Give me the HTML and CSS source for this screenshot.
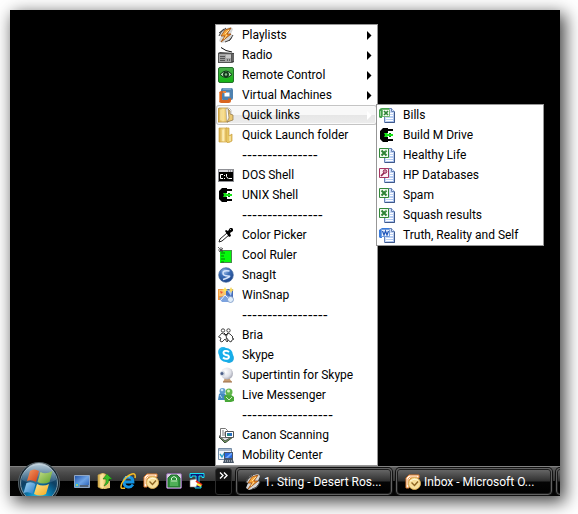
FILE: index.html
```html
<!DOCTYPE html>
<html lang="en">
<head>
<meta charset="utf-8">
<title>Desktop</title>
<link rel="stylesheet" href="styles.css">
</head>
<body>
<svg class="defs" aria-hidden="true">
  <defs>
    <linearGradient id="gFolder" x1="0" x2="1"><stop offset="0" stop-color="#d3a945"/><stop offset=".5" stop-color="#fbe397"/><stop offset="1" stop-color="#dfb350"/></linearGradient>
    <linearGradient id="gGreen" x1="0" y1="0" x2="0" y2="1"><stop offset="0" stop-color="#4cae4c"/><stop offset="1" stop-color="#12b512"/></linearGradient>
    <linearGradient id="gPage" x1="0" y1="0" x2="1" y2="1"><stop offset="0" stop-color="#eef4ff"/><stop offset="1" stop-color="#9ab7ea"/></linearGradient>
    <radialGradient id="gSnag" cx=".4" cy=".25" r=".8"><stop offset="0" stop-color="#9fbde8"/><stop offset=".4" stop-color="#3f70b8"/><stop offset="1" stop-color="#173f86"/></radialGradient>
    <linearGradient id="gBolt" x1="0" y1="0" x2="1" y2="1"><stop offset="0" stop-color="#ffc558"/><stop offset="1" stop-color="#e8700c"/></linearGradient>
    <radialGradient id="gBall" cx=".35" cy=".35" r=".75"><stop offset="0" stop-color="#fff"/><stop offset=".6" stop-color="#dfe1e8"/><stop offset="1" stop-color="#9a9caa"/></radialGradient>
    <radialGradient id="gOrb" cx=".5" cy=".95" r=".85"><stop offset="0" stop-color="#35d5f5"/><stop offset=".35" stop-color="#0b83b8"/><stop offset=".7" stop-color="#0d3f63"/><stop offset="1" stop-color="#2f5a78"/></radialGradient>
    <linearGradient id="gGloss" x1="0" y1="0" x2="0" y2="1"><stop offset="0" stop-color="#e4f0f8" stop-opacity=".8"/><stop offset="1" stop-color="#7fa6c2" stop-opacity=".2"/></linearGradient>
    <linearGradient id="gRed" x1="0" y1="0" x2="1" y2="1"><stop offset="0" stop-color="#f59a62"/><stop offset="1" stop-color="#cf3c14"/></linearGradient>
    <linearGradient id="gLeaf" x1="0" y1="0" x2="1" y2="1"><stop offset="0" stop-color="#c8e08a"/><stop offset="1" stop-color="#5ca02c"/></linearGradient>
    <linearGradient id="gSky" x1="0" y1="0" x2="1" y2="1"><stop offset="0" stop-color="#a5daf7"/><stop offset="1" stop-color="#2878c4"/></linearGradient>
    <linearGradient id="gSun" x1="0" y1="0" x2="1" y2="1"><stop offset="0" stop-color="#ffe38a"/><stop offset="1" stop-color="#f5a91d"/></linearGradient>
    <linearGradient id="gScreen" x1="0" y1="0" x2="1" y2="1"><stop offset="0" stop-color="#1c4fa8"/><stop offset=".5" stop-color="#6ea3e4"/><stop offset="1" stop-color="#1e55b0"/></linearGradient>

    <symbol id="winamp" viewBox="0 0 16 16">
      <path d="M5 2 13 0l2 2-2 5 2 1-4 6-7 2-3-2 2-5-2-1z" fill="#d5d5d5"/>
      <path d="M8 1 3 5 1 9M6 2 1 6M15 8l-3 5-5 2M14 10l-3 4" fill="none" stroke="#444"/>
      <path d="M13 1 7 3 3 9h4l-4 6 10-8H9z" fill="url(#gBolt)" stroke="#9c4a08" stroke-width=".8"/>
      <path d="m11 3-4 4M9 8l-3 4" stroke="#ffe29a"/>
    </symbol>
    <symbol id="radio" viewBox="0 0 16 16">
      <path d="m3 .5 5 3 6 1.500" fill="none" stroke="#111"/>
      <path d="m0 6 2-1 14 1v9l-2 1H0z" fill="#444"/>
      <path d="M.5 6.500h13v9H.5z" fill="#a5a5a5" stroke="#555"/>
      <path d="M2 9h5v5H2z" fill="#555"/><path d="M2 10.500h5M2 12.500h5" stroke="#ccc" stroke-width=".6"/>
      <path d="M8 8h5v3H8z" fill="#c9c9c9"/><path d="M9 13h1m1 0h1" stroke="#222"/>
      <path d="M15 7v7" stroke="#888"/>
    </symbol>
    <symbol id="eye" viewBox="0 0 16 16">
      <rect x=".5" y=".5" width="15" height="15" rx="1.500" fill="url(#gGreen)" stroke="#23702a"/>
      <path d="M2 7.500q6-7 12 0-6 6-12 0z" fill="#b3dfb3" stroke="#10351a"/>
      <circle cx="8" cy="7.500" r="3" fill="#143a1b"/><circle cx="8" cy="7.500" r="1.200" fill="#86bd89"/>
    </symbol>
    <symbol id="vm" viewBox="0 0 16 16">
      <rect x="3" y="1" width="12" height="12" rx="2" fill="#4f82b0"/><path d="M5 2h8" stroke="#9cc0de"/>
      <rect x="2.500" y="5.500" width="9" height="9" rx="1" fill="none" stroke="#d9641f" stroke-width="3"/>
      <rect x="5.500" y="4.500" width="7" height="6" rx="1" fill="#fff" stroke="#4f82b0" stroke-width="2"/>
      <path d="M5 5h3" stroke="#e9853e" stroke-width="2"/><path d="M1.500 6v8" stroke="#f09a60"/>
    </symbol>
    <symbol id="folder-open" viewBox="0 0 16 16">
      <path d="M1 1h9v14H0V2z" fill="url(#gFolder)" stroke="#b68b34" stroke-width=".7"/>
      <path d="m8 2 3-1 2 2v10l-4 2z" fill="#fff" stroke="#9a9a9a" stroke-width=".6"/>
      <path d="m10 2 2 2v3l3 1v5l-6 2 2-4z" fill="#ebc872" stroke="#8f7443" stroke-width=".7"/>
      <path d="M3 3v10" stroke="#f9e8ab"/>
    </symbol>
    <symbol id="folder" viewBox="0 0 16 16">
      <path d="M1 1h8l1 14H1z" fill="url(#gFolder)" stroke="#cba243" stroke-width=".7"/>
      <path d="M8 1h3v8l3-2v7l-4 2-2-2z" fill="#e8c763" stroke="#c99f3f" stroke-width=".7"/>
      <path d="M5 3v11M12 9v5" stroke="#fff5cb"/>
    </symbol>
    <symbol id="dos" viewBox="0 0 16 16">
      <path d="M0 2h16v13H0z" fill="#8f9095"/><path d="M1 3h14v2H1z" fill="#d5d5dc"/><path d="M10 4h1m1 0h1m1 0h1" stroke="#555"/>
      <path d="M1 5h14v9H1z" fill="#000"/>
      <path d="M5 7.500H2.500v4H5M6.500 8v1m0 2v1M8.500 7v2.500l2 2.500M11 11.500h3" stroke="#fff" fill="none"/>
    </symbol>
    <symbol id="plug" viewBox="0 0 16 16">
      <path d="M4 1h5v1h5v2H9v2H8v4h1v2h5v2H9v1H4l-3-3V4z" fill="#000"/>
      <path d="M5 6h3l1 1h5v2H9l-1 1H5l1-2z" fill="#16e516"/><path d="M10 6h2v1h-2zM10 9h2v1h-2z" fill="#087708"/>
    </symbol>
    <symbol id="picker" viewBox="0 0 16 16">
      <path d="M9 6 2 12l-1 3 3-1 7-6" fill="#fff" stroke="#222"/>
      <path d="m7 4 1-1 2 1 2-3h2l1 1v2l-3 2 1 3-2 1z" fill="#000"/><path d="m12 3 1-1" stroke="#aaa"/>
    </symbol>
    <symbol id="ruler" viewBox="0 0 16 16">
      <path d="M2 3h12v13H2z" fill="#05fa0b"/><path d="M2 3.500h11.500v12H3" fill="none" stroke="#4c8250"/>
      <path d="M3 6h4M3 9h3M3 12h4M3 15h3" stroke="#09790c"/>
      <path d="m0 0 5 5M3 0v5M0 3h5M1 5l4-4" stroke="#444" stroke-width=".8"/>
    </symbol>
    <symbol id="snagit" viewBox="0 0 16 16">
      <circle cx="8" cy="8" r="7.300" fill="url(#gSnag)" stroke="#476b9f" stroke-width=".7"/>
      <path d="M11.500 4Q5 3 5 6t5 3-5 3.500" fill="none" stroke="#d5e3fa" stroke-width="1.500"/>
    </symbol>
    <symbol id="winsnap" viewBox="0 0 16 16">
      <path d="M0 2h9v11H0z" fill="#f09a42"/><path d="M1 3h7v6H1z" fill="#f9c36d"/>
      <path d="M8 2h7v11H8z" fill="#476dba"/><path d="m9 3 5 1-1 5z" fill="#aacbf4"/>
      <path d="m1 11 7-3 5 2v5H4z" fill="#7ca3df"/><path d="m3 13 4-5 3 3" fill="none" stroke="#e6edff"/>
      <path d="m7 0 1 2 2 1-2 1-1 2-1-2-2-1 2-1z" fill="#ffe357"/><path d="m13 0 1 2 2 1-2 1-1 2-1-2-1-1 1-1z" fill="#f8d85e"/>
      <circle cx="12.500" cy="12.500" r="3" fill="#e0eefb" stroke="#7696c3" stroke-width=".8"/>
      <path d="m2 4 3 1-2 2z" fill="#ee5430"/>
    </symbol>
    <symbol id="bria" viewBox="0 0 16 16">
      <g fill="#fff" stroke="#444"><circle cx="5" cy="3.500" r="1.700"/><circle cx="10.500" cy="3.500" r="1.700"/>
      <path d="m4 6-3.500 4 2.500 1-1 3 2 1 3-3 2 3 1-1-2-3 2-1z"/><path d="m10 6-2 4 3 4 2 1 1-2 2-1-2-1 1-1-3-3z"/></g>
      <path d="m6 6 2 2 2-2" stroke="#222" fill="none"/>
    </symbol>
    <symbol id="skype" viewBox="0 0 16 16">
      <circle cx="5" cy="5" r="4.900" fill="#25b5ed"/><circle cx="11" cy="11" r="4.900" fill="#1ca9e2"/><circle cx="8" cy="8" r="6.900" fill="#16aeea"/>
      <path d="M11 5Q9 3.500 7 4 4.500 5 6 7q1 1 4 1.500 2 1.500 0 3-3 1-5-1" fill="none" stroke="#fff" stroke-width="1.900"/>
    </symbol>
    <symbol id="webcam" viewBox="0 0 16 16">
      <path d="M7 11h4l3 4H5z" fill="#c79c70"/><path d="M5 15h9" stroke="#9a6d46"/>
      <circle cx="9" cy="6.500" r="6" fill="url(#gBall)"/>
      <circle cx="4.500" cy="6.500" r="2.600" fill="#d2d8e0"/><circle cx="4" cy="6.500" r="1.500" fill="#4c5f88"/>
    </symbol>
    <symbol id="messenger" viewBox="0 0 16 16">
      <path d="M1 7q4-3 7 1v5H0z" fill="#4389c0"/><circle cx="4.500" cy="4" r="3" fill="#5d9dce"/><circle cx="4" cy="3" r="1.300" fill="#c3e2f6"/>
      <path d="M6 9q5-4 10 1v4l-3 1H7z" fill="#48a838"/><circle cx="11" cy="5" r="3.500" fill="#60b64b"/><circle cx="10.500" cy="4" r="1.500" fill="#d3f2b5"/>
      <path d="m8 10 3 3 3-3" fill="none" stroke="#cbeeb8"/><path d="m2 8 2 3" stroke="#b6dcf5"/>
    </symbol>
    <symbol id="scan" viewBox="0 0 16 16">
      <path d="m1 10 6-3 8 3-8 6z" fill="#71a55b" stroke="#3d4a3b"/><path d="M1 9h14l-8 5z" fill="#ddd" stroke="#555"/>
      <path d="M2.500 1.500h5l2 2v7h-7z" fill="#fff" stroke="#777"/><path d="M4 4h2M4 6h3M4 8h3" stroke="#777"/>
      <path d="M7.500 4.500h8v6h-8z" fill="#fff" stroke="#555"/><path d="M9 6h5v3H9z" fill="#286fc0"/><path d="M9 8h3" stroke="#22a343"/>
    </symbol>
    <symbol id="mobility" viewBox="0 0 16 16">
      <path d="M.5 1.500h13v11H.5z" fill="#f1f5fa" stroke="#738ba5"/><path d="M1 2h12v2H1z" fill="#a8bacc"/>
      <path d="m2 7 2 3 3-5" fill="none" stroke="#27a0c7" stroke-width="1.400"/>
      <path d="M6 5h9v8H6z" fill="#46566c"/><path d="M7 6h7v5H7z" fill="#286be0"/><path d="m7 11 6-5h1v1l-4 4z" fill="#70aaff"/>
      <path d="m6 13-1 3h11l-1-3z" fill="#485667"/><path d="M7 14h7" stroke="#d9dee5" stroke-dasharray="1 1"/>
    </symbol>
    <symbol id="page" viewBox="0 0 16 16">
      <path d="M5.500 1.500h7l3 3v11h-10z" fill="url(#gPage)" stroke="#6682b6"/><path d="M12.500 1.500v3h3" fill="#d8e4fa" stroke="#6682b6"/>
      <path d="M11 6.500h3M11 8.500h3M7 11.500h7M7 13.500h7" stroke="#fff"/><path d="M15.500 5v10.500H6" fill="none" stroke="#3f5889"/>
    </symbol>
    <symbol id="excel" viewBox="0 0 16 16">
      <use href="#page"/><path d="M.5 1.500h9v9h-9z" fill="#f4fbf2" stroke="#33883a"/>
      <path d="m2.500 3.500 5 5m0-5-5 5" stroke="#2d8335" stroke-width="2"/><path d="m6 4 2-1" stroke="#94c790"/>
    </symbol>
    <symbol id="excel-sheet" viewBox="0 0 16 16">
      <use href="#page"/><path d="M0 3q1-2 3-2h7v9H3v1H1l-1-1z" fill="#43a04b"/><path d="M3.500 2.500h7v7h-7z" fill="#f4fbf2" stroke="#72b773"/>
      <path d="m5 4 4 4m0-4L5 8" stroke="#2d8335" stroke-width="1.700"/><path d="M1.500 4v5" stroke="#9bd298"/>
    </symbol>
    <symbol id="access" viewBox="0 0 16 16">
      <use href="#page"/><path d="M.5 1.500h9v9h-9z" fill="#fdf0f5" stroke="#a53662"/>
      <path d="M2 9 6 5" stroke="#8f214e" stroke-width="1.700"/><circle cx="6" cy="4.500" r="1.800" fill="#cc8ca7" stroke="#9a2f5b"/>
    </symbol>
    <symbol id="word" viewBox="0 0 16 16">
      <use href="#page"/><path d="m0 3 3-2h7v9H3v1H1l-1-1z" fill="#397bdc"/><path d="M2.500 2.500h8v7h-8z" fill="#edf4ff" stroke="#759fde"/>
      <path d="m3.500 4 1.500 4 1.500-4L8 8l1.500-4" fill="none" stroke="#2358ba" stroke-width="1.300"/>
    </symbol>
    <symbol id="desktop" viewBox="0 0 16 16">
      <path d="M.5 2.500h15v12H.5z" fill="url(#gScreen)" stroke="#8fa6c4"/><path d="M1 12h14v2H1z" fill="#7c92aa"/>
      <path d="M6 13h8" stroke="#26354b"/><circle cx="3" cy="12" r="2" fill="#2bb0e6"/><path d="M3 11v2M2 12h2" stroke="#ffcf39" stroke-width=".7"/>
    </symbol>
    <symbol id="folder-up" viewBox="0 0 16 16">
      <path d="M1 2 6 0l4 2v13l-5 1-4-2z" fill="url(#gFolder)" stroke="#cba64c" stroke-width=".6"/><path d="M7 8h6v7l-6 1z" fill="#e8ca78"/>
      <path d="m10 1 5 5h-3q0 5-5 7 3-4 2-7H6z" fill="#38bd27" stroke="#187b13" stroke-width=".6"/><path d="M4 2v12" stroke="#fff1b8"/>
    </symbol>
    <symbol id="ie" viewBox="0 0 16 16">
      <path d="M13 11.500q-2 3-5 2.500-4-.5-4-5t4-5q5 0 5 5H5" fill="none" stroke="#1594e2" stroke-width="2.800"/>
      <path d="M5 4q2-1 5 0" stroke="#7bd8ff" fill="none"/>
      <path d="M15 5q1-5-3-4Q6 3 2 10q-3 7 3 5" fill="none" stroke="#f3bb27" stroke-width="1.500"/>
    </symbol>
    <symbol id="outlook" viewBox="0 0 16 16">
      <path d="M1 13V4l3-3h10v3H6L4 6v8H1z" fill="#fff4e6" stroke="#df7a2b"/><path d="M3 11V5l2-2h7" fill="none" stroke="#f3a55f"/>
      <circle cx="9.500" cy="9.500" r="6" fill="#f7df9b" stroke="#d9ac55"/>
      <path d="M5 7q4-3 8-1" stroke="#fff8d7" fill="none"/><path d="m6.500 8.500 3 3 3.500-4" fill="none" stroke="#8c6422" stroke-width="1.400"/>
    </symbol>
    <symbol id="bag" viewBox="0 0 16 16">
      <rect x=".5" y=".5" width="15" height="15" rx="1.500" fill="#d8cce0" stroke="#8b67a5"/>
      <path d="m2 5 3-3h6l3 3v9H2z" fill="#2c8f3a" stroke="#256c31"/><path d="M5.500 7V5q2.500-3 5 0v2" fill="none" stroke="#d7f3d8"/>
      <path d="M4 7h8v6H4z" fill="#4fae57"/><path d="M5 8h6" stroke="#bfe6bd"/>
    </symbol>
    <symbol id="textpad" viewBox="0 0 16 16">
      <path d="M1 .5h14v4h-2V3h-3v9h2v3H6v-2h1V3H3v1.500H1z" fill="#0b1b7c" stroke="#19dff2"/>
      <path d="m1 7 6-1 2 4-2 4H1z" fill="#fff" stroke="#777" stroke-width=".6"/><path d="m7 8 6 4" stroke="#e62a1b" stroke-width="2"/><path d="m8 11 4 2" stroke="#ffe62b" stroke-width="2"/>
    </symbol>
    <symbol id="arrow" viewBox="0 0 5 9"><path d="M0 0v9l4.500-4.500z"/></symbol>
    <symbol id="orb" viewBox="0 0 42 42">
      <circle cx="21" cy="21" r="20.500" fill="#16242d" stroke="#58656c"/>
      <circle cx="21" cy="21" r="18.500" fill="url(#gOrb)" stroke="#7c99a8"/>
      <path d="M4 18a17 17 0 0 1 34 0q-8 4-17 4T4 18z" fill="url(#gGloss)"/>
      <path d="M12 9q4-3 9 0l-3 11q-5-3-9-1z" fill="url(#gRed)"/>
      <path d="M22.500 10q5 3 12-1l-3 11q-6 3-12 0z" fill="url(#gLeaf)"/>
      <path d="M8.500 21q5-2 9 1l-3 10q-4-3-9-1z" fill="url(#gSky)"/>
      <path d="M19 22q6 3 12 0l-3 10q-6 3-12 0z" fill="url(#gSun)"/>
    </symbol>
  </defs>
</svg>

<main class="desktop">
  <div class="wallpaper"></div>
  <footer class="taskbar">
    <button class="start" aria-label="Start"><svg><use href="#orb"/></svg></button>
    <nav class="quick" aria-label="Quick Launch">
      <button class="quick-item" aria-label="Show desktop"><svg class="icon"><use href="#desktop"/></svg></button>
      <button class="quick-item" aria-label="Folder"><svg class="icon"><use href="#folder-up"/></svg></button>
      <button class="quick-item" aria-label="Internet Explorer"><svg class="icon"><use href="#ie"/></svg></button>
      <button class="quick-item" aria-label="Outlook"><svg class="icon"><use href="#outlook"/></svg></button>
      <button class="quick-item" aria-label="Bag"><svg class="icon"><use href="#bag"/></svg></button>
      <button class="quick-item" aria-label="TextPad"><svg class="icon"><use href="#textpad"/></svg></button>
    </nav>
    <div class="overflow">
      <button class="more" aria-label="More"><svg viewBox="0 0 9 7"><path d="m1 .5 3 3-3 3m4-6 3 3-3 3"/></svg></button>
      <ul class="menu">
        <li><button class="item"><svg class="icon"><use href="#winamp"/></svg>Playlists<svg class="arrow"><use href="#arrow"/></svg></button></li>
        <li><button class="item"><svg class="icon"><use href="#radio"/></svg>Radio<svg class="arrow"><use href="#arrow"/></svg></button></li>
        <li><button class="item"><svg class="icon"><use href="#eye"/></svg>Remote Control<svg class="arrow"><use href="#arrow"/></svg></button></li>
        <li><button class="item"><svg class="icon"><use href="#vm"/></svg>Virtual Machines<svg class="arrow"><use href="#arrow"/></svg></button></li>
        <li class="parent">
          <button class="item selected"><svg class="icon"><use href="#folder-open"/></svg>Quick links<svg class="arrow"><use href="#arrow"/></svg></button>
          <ul class="menu submenu">
            <li><button class="item"><svg class="icon"><use href="#excel-sheet"/></svg>Bills</button></li>
            <li><button class="item"><svg class="icon"><use href="#plug"/></svg>Build M Drive</button></li>
            <li><button class="item"><svg class="icon"><use href="#excel"/></svg>Healthy Life</button></li>
            <li><button class="item"><svg class="icon"><use href="#access"/></svg>HP Databases</button></li>
            <li><button class="item"><svg class="icon"><use href="#excel"/></svg>Spam</button></li>
            <li><button class="item"><svg class="icon"><use href="#excel"/></svg>Squash results</button></li>
            <li><button class="item"><svg class="icon"><use href="#word"/></svg>Truth, Reality and Self</button></li>
          </ul>
        </li>
        <li><button class="item"><svg class="icon"><use href="#folder"/></svg>Quick Launch folder</button></li>
        <li class="divider">---------------</li>
        <li><button class="item"><svg class="icon"><use href="#dos"/></svg>DOS Shell</button></li>
        <li><button class="item"><svg class="icon"><use href="#plug"/></svg>UNIX Shell</button></li>
        <li class="divider">----------------</li>
        <li><button class="item"><svg class="icon"><use href="#picker"/></svg>Color Picker</button></li>
        <li><button class="item"><svg class="icon"><use href="#ruler"/></svg>Cool Ruler</button></li>
        <li><button class="item"><svg class="icon"><use href="#snagit"/></svg>SnagIt</button></li>
        <li><button class="item"><svg class="icon"><use href="#winsnap"/></svg>WinSnap</button></li>
        <li class="divider">-----------------</li>
        <li><button class="item"><svg class="icon"><use href="#bria"/></svg>Bria</button></li>
        <li><button class="item"><svg class="icon"><use href="#skype"/></svg>Skype</button></li>
        <li><button class="item"><svg class="icon"><use href="#webcam"/></svg>Supertintin for Skype</button></li>
        <li><button class="item"><svg class="icon"><use href="#messenger"/></svg>Live Messenger</button></li>
        <li class="divider">------------------</li>
        <li><button class="item"><svg class="icon"><use href="#scan"/></svg>Canon Scanning</button></li>
        <li><button class="item"><svg class="icon"><use href="#mobility"/></svg>Mobility Center</button></li>
      </ul>
    </div>
    <div class="tasks">
      <button class="task"><svg class="icon"><use href="#winamp"/></svg>1. Sting - Desert Ros...</button>
      <button class="task"><svg class="icon"><use href="#outlook"/></svg>Inbox - Microsoft O...</button>
      <button class="task" aria-label="Window"></button>
    </div>
  </footer>
</main>
</body>
</html>
```

FILE: styles.css
```css
* {
  box-sizing: border-box;
}

body {
  margin: 0;
  min-height: 100vh;
  padding: 10px 18px 18px 10px;
  display: flex;
  background: #fff;
  font: 12px/20px Roboto, "Open Sans", sans-serif;
  overflow: hidden;
}

button {
  margin: 0;
  padding: 0;
  border: 0;
  background: none;
  color: inherit;
  font: inherit;
}

svg {
  display: block;
  flex: none;
}

.defs {
  position: absolute;
  width: 0;
  height: 0;
}

.icon {
  width: 16px;
  height: 16px;
}

.desktop {
  flex: 1;
  min-width: 0;
  display: flex;
  flex-direction: column;
  background: #000;
  box-shadow: 4px 5px 16px 1px rgba(0, 0, 0, 0.75);
}

.wallpaper {
  flex: 1;
}

.taskbar {
  display: flex;
  height: 30px;
  background: linear-gradient(#808080 1px, #606060 1px, #4a4a4a 7px, #353535 15px, #000 15px, #050505 100%);
}

.start {
  width: 42px;
  height: 34px;
  margin: -4px 12px 0 8px;
  overflow: hidden;
}

.start svg {
  width: 42px;
  height: 42px;
}

.quick {
  display: flex;
  align-items: center;
  gap: 7px;
  padding: 0 10px 0 2px;
}

.overflow {
  position: relative;
  padding-top: 2px;
}

.more {
  display: flex;
  justify-content: center;
  width: 17px;
  height: 27px;
  padding-top: 3px;
  border: 1px solid #2c2c2c;
  border-radius: 3px;
  background: linear-gradient(#151515 50%, #000 50%);
}

.more svg {
  width: 9px;
  height: 7px;
  fill: none;
  stroke: #fff;
  stroke-width: 1.4;
}

.menu {
  position: absolute;
  bottom: 100%;
  left: 0;
  width: 163px;
  margin: 0;
  padding: 0;
  border: 1px solid #979797;
  background: #fff;
  color: #000;
  list-style: none;
}

.submenu {
  top: -1px;
  bottom: auto;
  left: calc(100% - 1px);
  width: 168px;
}

.parent {
  position: relative;
}

.item {
  display: flex;
  align-items: center;
  gap: 8px;
  width: 100%;
  height: 20px;
  padding: 0 5px 0 2px;
  text-align: left;
  white-space: nowrap;
}

.selected {
  border-radius: 3px;
  background: linear-gradient(#f8f8f8 50%, #e6e6e6 50%, #ededed);
  box-shadow: inset 0 0 0 1px #c4c4c4, inset 0 0 0 2px #fafafa;
}

.arrow {
  width: 5px;
  height: 9px;
  margin-left: auto;
}

.selected .arrow {
  fill: #fff;
}

.divider {
  height: 20px;
  padding-left: 26px;
  font: 14px/20px "DejaVu Sans", sans-serif;
}

.tasks {
  flex: 1;
  min-width: 0;
  display: flex;
  gap: 4px;
  padding: 2px 0 0 4px;
  overflow: hidden;
}

.task {
  display: flex;
  flex: none;
  align-items: center;
  gap: 3px;
  width: 156px;
  height: 27px;
  padding: 0 8px;
  border: 1px solid #606060;
  border-radius: 4px;
  background: linear-gradient(#6a6a6a, #303030 12px, #050505 13px, #000);
  box-shadow: inset 0 0 0 1px #1c1c1c, 0 0 0 1px #111;
  color: #fff;
  white-space: nowrap;
}
```
